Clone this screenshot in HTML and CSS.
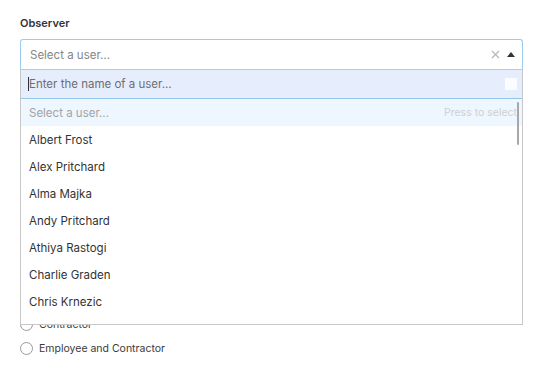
FILE: index.html
```html
<!DOCTYPE html>
<html lang="en">

<head>
    <meta charset="UTF-8">
    <meta name="viewport" content="width=device-width, initial-scale=1.0">
    <title>Observer</title>
    <link rel="stylesheet" href="styles.css">
</head>

<body>
    <form class="form">
        <div class="field">
            <label class="field-label">Observer</label>

            <div class="picker">
                <div class="picker-control">
                    <span class="picker-value">Select a user...</span>
                    <span class="picker-clear">
                        <svg width="9" height="9" viewBox="0 0 9 9"><path d="M1 1L8 8M8 1L1 8" stroke="#b5b5b5" stroke-width="1.1" fill="none"/></svg>
                    </span>
                    <span class="picker-arrow">
                        <svg width="8" height="5" viewBox="0 0 8 5"><path d="M0 5L4 0L8 5Z" fill="#333"/></svg>
                    </span>
                </div>

                <!-- open dropdown -->
                <div class="picker-menu">
                    <div class="picker-search">
                        <span class="caret"></span>
                        <input type="text" placeholder="Enter the name of a user...">
                        <span class="search-badge"></span>
                    </div>
                    <div class="picker-options">
                        <div class="option option-empty">
                            <span>Select a user...</span>
                            <span class="hint">Press to select</span>
                        </div>
                        <div class="option">Albert Frost</div>
                        <div class="option">Alex Pritchard</div>
                        <div class="option">Alma Majka</div>
                        <div class="option">Andy Pritchard</div>
                        <div class="option">Athiya Rastogi</div>
                        <div class="option">Charlie Graden</div>
                        <div class="option">Chris Krnezic</div>
                        <span class="scroll-thumb"></span>
                    </div>
                </div>
            </div>
        </div>

        <div class="radios">
            <label class="radio"><span class="radio-dot"></span>Contractor</label>
            <label class="radio"><span class="radio-dot"></span>Employee and Contractor</label>
        </div>
    </form>
</body>

</html>
```

FILE: styles.css
```css
body {
    margin: 0;
    font-family: Inter, "Open Sans", sans-serif;
    color: #333;
    background-color: #fff;
}

.form {
    padding: 16px 19px 31px 20px;
}

.field-label {
    display: block;
    font-size: 11px;
    font-weight: 600;
    color: #333;
    margin-bottom: 9px;
}

/* select box */
.picker {
    position: relative;
}

.picker-control {
    display: flex;
    align-items: center;
    height: 29px;
    padding: 0 7px 0 9px;
    border: 1px solid #9ccbec;
    border-bottom-color: #c9c9c9;
    border-radius: 3px 3px 0 0;
    font-size: 11.5px;
}

.picker-value {
    flex: 1;
    color: #858585;
}

.picker-clear {
    display: flex;
    margin-right: 7px;
}

.picker-arrow {
    display: flex;
    margin-bottom: 1px;
}

/* dropdown */
.picker-menu {
    position: absolute;
    top: 100%;
    left: 0;
    right: 0;
    height: 254px;
    background-color: #fff;
    border: 1px solid #c8c8c8;
    border-top: none;
    overflow: hidden;
    z-index: 10;
}

.picker-search {
    display: flex;
    align-items: center;
    height: 28px;
    padding: 0 5px 0 7px;
    background-color: #e6eefd;
    border-bottom: 1px solid #93c4ea;
}

.picker-search input {
    flex: 1;
    border: none;
    background: transparent;
    font-family: inherit;
    font-size: 11.5px;
    padding: 0;
    outline: none;
}

.picker-search input::placeholder {
    color: #6d6d72;
}

.caret {
    width: 1px;
    height: 14px;
    background-color: #333;
}

.search-badge {
    width: 12px;
    height: 12px;
    background-color: #fafcff;
    border-radius: 1px;
}

.picker-options {
    position: relative;
    font-size: 11.5px;
}

.option {
    display: flex;
    align-items: center;
    height: 27px;
    padding: 0 5px 0 8px;
}

.option-empty {
    justify-content: space-between;
    background-color: #eef6ff;
    color: #a3a3a3;
}

.hint {
    color: #d0d0d0;
    font-size: 10.5px;
}

.scroll-thumb {
    position: absolute;
    top: 3px;
    right: 3px;
    width: 2px;
    height: 43px;
    background-color: #a8a8a8;
    border-radius: 1px;
}

/* radios partly under the open menu */
.radios {
    display: flex;
    flex-direction: column;
    margin-top: 242px;
}

.radio {
    display: flex;
    align-items: center;
    height: 24px;
    font-size: 10.5px;
    color: #3a3a3a;
}

.radio-dot {
    width: 11px;
    height: 11px;
    border: 1px solid #999;
    border-radius: 50%;
    margin-right: 6px;
}
```
